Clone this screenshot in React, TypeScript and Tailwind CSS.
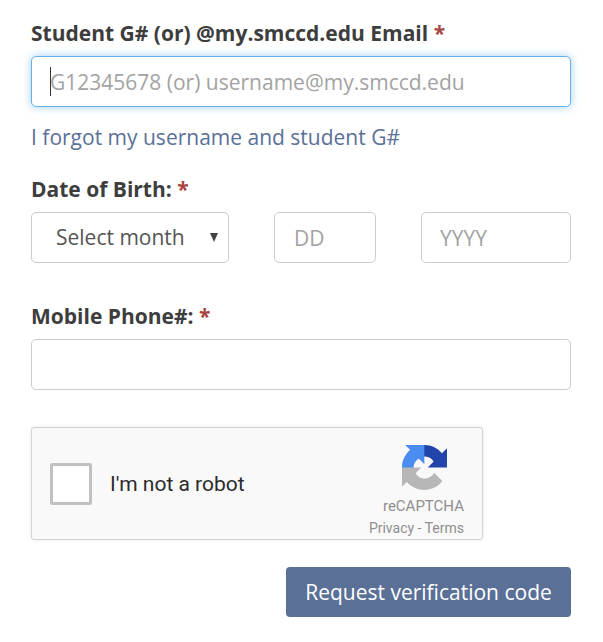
import React from "react";

function Label({ children }: { children: React.ReactNode }) {
  return (
    <label className="block text-[21px] leading-[30px] font-bold text-[#3d3d3d]">
      {children} <span className="text-[#a94442]">*</span>
    </label>
  );
}

function RecaptchaLogo() {
  return (
    <svg width="45" height="45" viewBox="0 0 64 64">
      <path
        d="M64 31.955l-.033-1.37V4.687l-7.16 7.16C50.948 4.674 42.033.093 32.05.093c-10.4 0-19.622 4.96-25.458 12.64l11.736 11.86a15.55 15.55 0 0 1 4.754-5.334c2.05-1.6 4.952-2.906 8.968-2.906.485 0 .86.057 1.135.163 4.976.393 9.288 3.14 11.828 7.124l-8.307 8.307c10.522-.04 22.4-.066 27.295.005"
        fill="#2344a8"
      />
      <path
        d="M31.862.094l-1.37.033H4.594l7.16 7.16C4.58 13.147 0 22.06 0 32.046c0 10.4 4.96 19.622 12.64 25.458l11.86-11.736a15.55 15.55 0 0 1-5.334-4.754c-1.6-2.05-2.906-4.952-2.906-8.968 0-.485.057-.86.163-1.135.393-4.976 3.14-9.288 7.124-11.828l8.307 8.307c-.04-10.522-.066-22.4.005-27.295"
        fill="#4a8cf0"
      />
      <path
        d="M.001 32.045l.033 1.37v25.898l7.16-7.16c5.86 7.173 14.774 11.754 24.76 11.754 10.4 0 19.622-4.96 25.458-12.64L45.676 39.408a15.55 15.55 0 0 1-4.754 5.334c-2.05 1.6-4.952 2.906-8.968 2.906-.485 0-.86-.057-1.135-.163-4.976-.393-9.288-3.14-11.828-7.124l8.307-8.307C17.776 32.094 5.9 32.12.001 32.045"
        fill="#b7b7b7"
      />
    </svg>
  );
}

export default function App() {
  return (
    <div className="min-h-[642px] w-[603px] bg-white pr-[32px] pl-[31px] pt-[18px] font-['Open_Sans',sans-serif]">
      <Label>Student G# (or) @my.smccd.edu Email</Label>
      <div className="relative mt-[8px]">
        <input
          placeholder="G12345678 (or) username@my.smccd.edu"
          className="block h-[51px] w-full rounded-[5px] border border-[#66afe9] bg-white pl-[18px] text-[21px] shadow-[0_0_8px_rgba(102,175,233,0.6)] outline-none placeholder:text-[#a3a3a3]"
        />
        <span className="absolute left-[19px] top-[11px] h-[29px] w-px bg-[#333]" />
      </div>
      <a className="mt-[15px] block text-[21px] leading-[30px] text-[#5a7097]">I forgot my username and student G#</a>

      <div className="mt-[22px]">
        <Label>Date of Birth:</Label>
      </div>
      <div className="mt-[8px] flex">
        <div className="relative w-[198px]">
          <select className="block h-[51px] w-full appearance-none rounded-[5px] border border-[#ccc] bg-white pl-[24px] text-[21px] text-[#555] outline-none">
            <option>Select month</option>
          </select>
          <span className="absolute right-[11px] top-[21px] h-0 w-0 border-x-[4px] border-t-[9px] border-x-transparent border-t-[#444]" />
        </div>
        <input
          placeholder="DD"
          className="ml-[45px] block h-[51px] w-[102px] rounded-[5px] border border-[#ccc] bg-white pl-[19px] text-[21px] outline-none placeholder:text-[#a3a3a3]"
        />
        <input
          placeholder="YYYY"
          className="ml-[45px] block h-[51px] w-[150px] rounded-[5px] border border-[#ccc] bg-white pl-[18px] text-[21px] outline-none placeholder:text-[#a3a3a3]"
        />
      </div>

      <div className="mt-[38px]">
        <Label>Mobile Phone#:</Label>
      </div>
      <input className="mt-[8px] block h-[51px] w-full rounded-[5px] border border-[#ccc] bg-white text-[21px] outline-none" />

      <div className="mt-[37px] flex h-[113px] w-[452px] items-center rounded-[3px] border border-[#d3d3d3] bg-[#f9f9f9] pr-[18px] pl-[18px] font-['Roboto',sans-serif] shadow-[0_0_4px_rgba(0,0,0,0.08)]">
        <div className="h-[42px] w-[42px] rounded-[2px] border-[3px] border-[#c1c1c1] bg-white" />
        <span className="ml-[18px] flex-1 pt-[3px] text-[21px] text-[#2b2b2b]">I'm not a robot</span>
        <div className="flex w-[96px] flex-col items-end self-start pt-[17px]">
          <div className="mr-[17px]">
            <RecaptchaLogo />
          </div>
          <span className="mt-[7px] text-[15px] leading-[18px] text-[#8f8f8f]">reCAPTCHA</span>
          <span className="mt-[4px] text-[14px] leading-[18px] text-[#8f8f8f]">Privacy - Terms</span>
        </div>
      </div>

      <div className="mt-[27px] flex justify-end">
        <button className="h-[50px] w-[285px] rounded-[4px] bg-[#5a7097] pt-[1px] text-[21px] text-white">Request verification code</button>
      </div>
    </div>
  );
}
